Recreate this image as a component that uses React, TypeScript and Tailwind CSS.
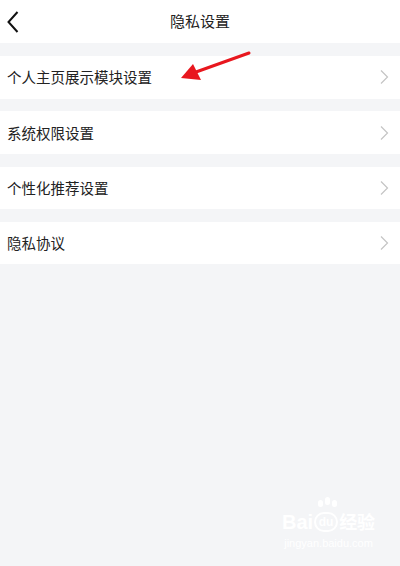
import React from "react";

const items = ["个人主页展示模块设置", "系统权限设置", "个性化推荐设置", "隐私协议"];

const Chevron = () => (
  <svg width="10" height="16" viewBox="0 0 10 16" className="shrink-0">
    <path d="M2 1.5 L8.5 8 L2 14.5" fill="none" stroke="#c4c4c4" strokeWidth="1.2" />
  </svg>
);

const App = () => {
  return (
    <div
      className="relative w-[400px] h-[566px] overflow-hidden bg-[#f4f5f7] text-[#222]"
      style={{ fontFamily: '"Noto Sans CJK SC", "Noto Sans", sans-serif' }}
    >
      {/* header */}
      <div className="relative flex items-center justify-center h-[43px] bg-white">
        <svg width="14" height="24" viewBox="0 0 14 24" className="absolute left-[6px] top-[10px]">
          <path d="M11.5 2 L2.5 12 L11.5 22" fill="none" stroke="#111" strokeWidth="2" />
        </svg>
        <div className="text-[15px]">隐私设置</div>
      </div>

      <div className="flex flex-col gap-[12.8px] pt-[13px]">
        {items.map((t) => (
          <div key={t} className="flex items-center justify-between h-[42.5px] bg-white pl-[7px] pr-[11px]">
            <span className="text-[14.5px]">{t}</span>
            <Chevron />
          </div>
        ))}
      </div>

      {/* red arrow annotation */}
      <svg width="400" height="100" className="absolute left-0 top-0 pointer-events-none">
        <line x1="249" y1="53" x2="196" y2="72" stroke="#e8171e" strokeWidth="3" strokeLinecap="round" />
        <polygon points="181,78 193,64 201,80" fill="#e8171e" />
      </svg>

      {/* watermark */}
      <div className="absolute left-[282px] top-[512px] flex flex-col items-center text-white pointer-events-none">
        <div className="flex items-end font-bold text-[20px] leading-none" style={{ fontFamily: '"Liberation Sans", "Noto Sans CJK SC", sans-serif' }}>
          <span>Bai</span>
          <span className="relative mx-[1px] flex items-center justify-center w-[24px] h-[20px] rounded-[10px] border-2 border-white text-[12px]">
            du
            <span className="absolute -top-[14px] left-[2px] flex gap-[2px]">
              <span className="w-[5px] h-[7px] rounded-full bg-white" />
              <span className="w-[5px] h-[8px] rounded-full bg-white -mt-[3px]" />
              <span className="w-[5px] h-[7px] rounded-full bg-white" />
            </span>
          </span>
          <span className="text-[18px]">经验</span>
        </div>
        <div className="text-[11px] mt-[3px]" style={{ fontFamily: '"Liberation Sans", sans-serif' }}>jingyan.baidu.com</div>
      </div>
    </div>
  );
};

export default App;
